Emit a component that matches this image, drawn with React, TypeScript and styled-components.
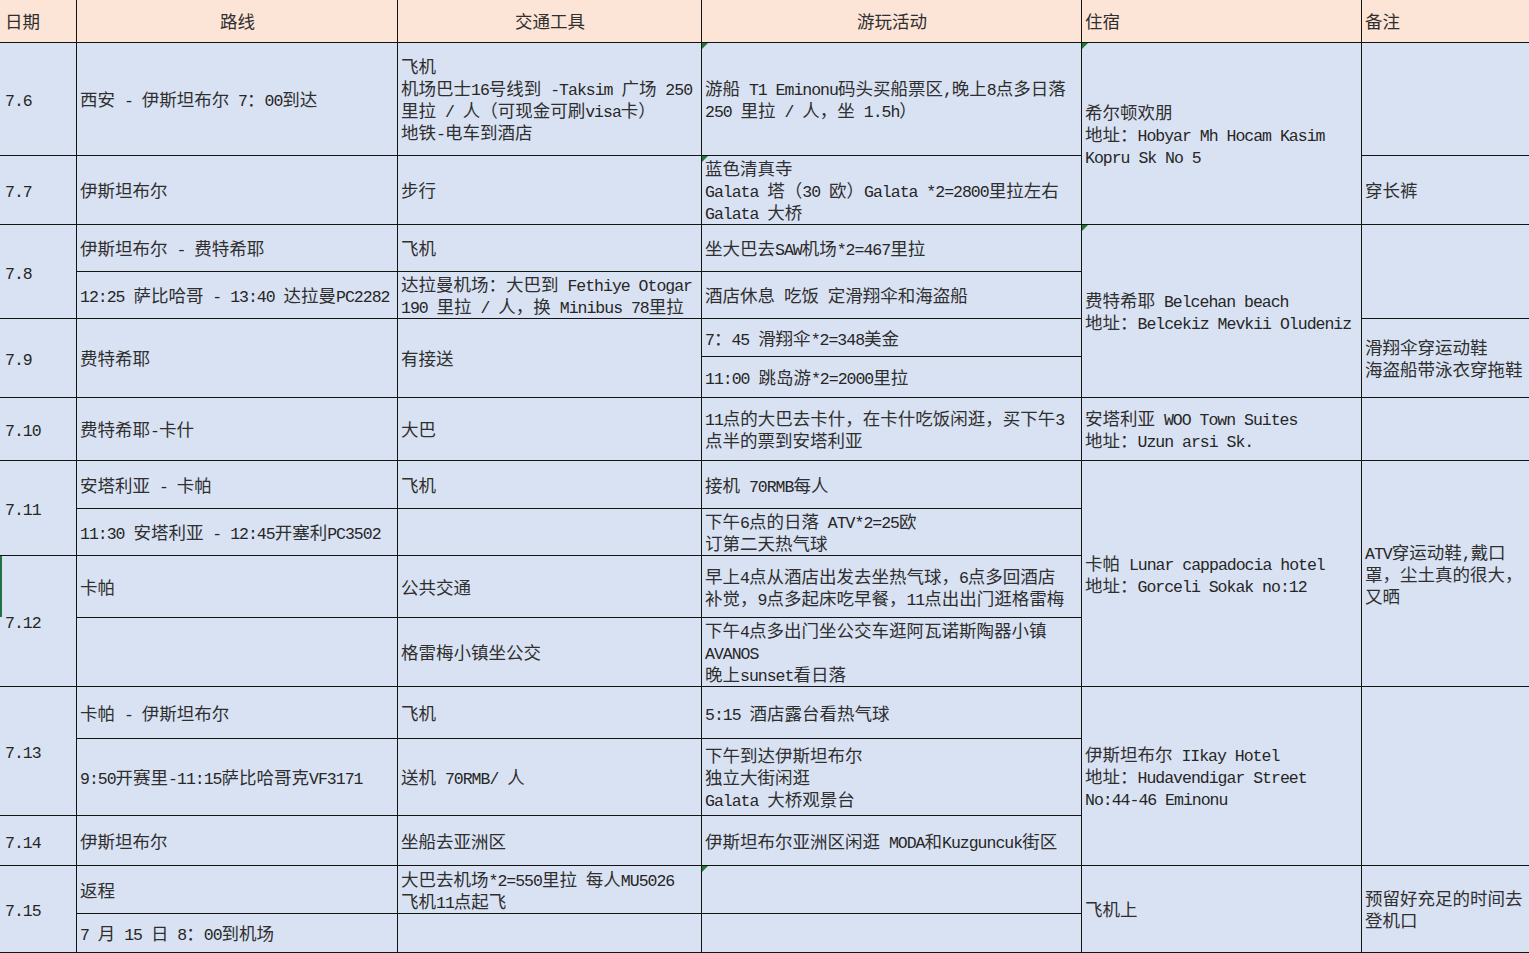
import React from 'react';
import styled, { createGlobalStyle } from 'styled-components';

const GlobalStyle = createGlobalStyle`
  html, body { margin: 0; padding: 0; background: #ffffff; overflow: hidden; }
  body { font-family: "Noto Sans CJK SC", "Noto Sans CJK JP", sans-serif; }
`;

const Sheet = styled.div`
  display: grid;
  grid-template-columns: 77px 321px 304px 380px 280px 168px;
  grid-template-rows: 43px 113px 69px 47px 47px 38px 41px 63px 48px 47px 62px 69px 52px 77px 50px 48px 39px;
  width: 1530px;
  height: 953px;
  font-family: "Noto Sans CJK SC", "Noto Sans CJK JP", sans-serif;
  font-size: 17.5px;
  line-height: 22px;
  color: #2f2f2f;
`;

const Cell = styled.div<{
  $span: number;
  $head: boolean;
  $center: boolean;
  $date: boolean;
  $mark: boolean;
  $sel: boolean;
}>`
  position: relative;
  box-sizing: border-box;
  grid-row: span ${(p) => p.$span};
  background: ${(p) => (p.$head ? '#fce4d6' : '#d9e2f3')};
  border-right: 1px solid #141414;
  border-bottom: 1px solid #141414;
  display: flex;
  flex-direction: column;
  justify-content: center;
  align-items: ${(p) => (p.$center ? 'center' : 'flex-start')};
  padding: 0 2px 0 ${(p) => (p.$date ? 5 : 3)}px;
  white-space: pre;
  overflow: hidden;

  &::before {
    content: '';
    display: ${(p) => (p.$mark ? 'block' : 'none')};
    position: absolute;
    left: 0;
    top: 0;
    width: 0;
    height: 0;
    border-top: 6px solid #1e7b34;
    border-right: 6px solid transparent;
  }

  &::after {
    content: '';
    display: ${(p) => (p.$sel ? 'block' : 'none')};
    position: absolute;
    left: 0;
    top: 0;
    width: 2px;
    height: 61px;
    background: #217346;
  }
`;

const Line = styled.div`
  height: 22px;
`;

const Latin = styled.span`
  font-family: "Liberation Mono", "DejaVu Sans Mono", monospace;
  font-size: 16.5px;
  letter-spacing: -1px;
  color: #262626;
`;

type CellData = {
  t?: string | string[];
  span?: number;
  center?: boolean;
  mark?: boolean;
  sel?: boolean;
  date?: boolean;
};

const LATIN_RUN = /([\u0020-\u024F]+)/;
const IS_LATIN = /^[\u0020-\u024F]+$/;

function runs(s: string) {
  return s
    .split(LATIN_RUN)
    .filter(Boolean)
    .map((part, i) =>
      IS_LATIN.test(part) ? <Latin key={i}>{part}</Latin> : <React.Fragment key={i}>{part}</React.Fragment>
    );
}

const header: CellData[] = [
  { t: '日期' },
  { t: '路线', center: true },
  { t: '交通工具', center: true },
  { t: '游玩活动', center: true },
  { t: '住宿' },
  { t: '备注' },
];

const body: CellData[] = [
  // 7.6
  { t: '7.6', date: true },
  { t: '西安 - 伊斯坦布尔 7：00到达' },
  { t: ['飞机', '机场巴士16号线到 -Taksim 广场 250', '里拉 / 人（可现金可刷visa卡）', '地铁-电车到酒店'] },
  { t: ['游船 T1 Eminonu码头买船票区,晚上8点多日落', '250 里拉 / 人，坐 1.5h）'], mark: true },
  { t: ['希尔顿欢朋', '地址：Hobyar Mh Hocam Kasim', 'Kopru Sk No 5'], span: 2, mark: true },
  {},
  // 7.7
  { t: '7.7', date: true },
  { t: '伊斯坦布尔' },
  { t: '步行' },
  { t: ['蓝色清真寺', 'Galata 塔（30 欧）Galata *2=2800里拉左右', 'Galata 大桥'], mark: true },
  { t: '穿长裤' },
  // 7.8
  { t: '7.8', span: 2, date: true },
  { t: '伊斯坦布尔 - 费特希耶' },
  { t: '飞机' },
  { t: '坐大巴去SAW机场*2=467里拉' },
  { t: ['费特希耶 Belcehan beach', '地址：Belcekiz Mevkii Oludeniz'], span: 4, mark: true },
  { span: 2 },
  { t: '12:25 萨比哈哥 - 13:40 达拉曼PC2282' },
  { t: ['达拉曼机场：大巴到 Fethiye Otogar', '190 里拉 / 人，换 Minibus 78里拉'] },
  { t: '酒店休息 吃饭 定滑翔伞和海盗船' },
  // 7.9
  { t: '7.9', span: 2, date: true },
  { t: '费特希耶', span: 2 },
  { t: '有接送', span: 2 },
  { t: '7：45 滑翔伞*2=348美金' },
  { t: ['滑翔伞穿运动鞋', '海盗船带泳衣穿拖鞋'], span: 2 },
  { t: '11:00 跳岛游*2=2000里拉' },
  // 7.10
  { t: '7.10', date: true },
  { t: '费特希耶-卡什' },
  { t: '大巴' },
  { t: ['11点的大巴去卡什，在卡什吃饭闲逛，买下午3', '点半的票到安塔利亚'] },
  { t: ['安塔利亚 WOO Town Suites', '地址：Uzun arsi Sk.'] },
  {},
  // 7.11
  { t: '7.11', span: 2, date: true },
  { t: '安塔利亚 - 卡帕' },
  { t: '飞机' },
  { t: '接机 70RMB每人' },
  { t: ['卡帕 Lunar cappadocia hotel', '地址：Gorceli Sokak no:12'], span: 4 },
  { t: ['ATV穿运动鞋,戴口', '罩，尘土真的很大，', '又晒'], span: 4 },
  { t: '11:30 安塔利亚 - 12:45开塞利PC3502' },
  {},
  { t: ['下午6点的日落 ATV*2=25欧', '订第二天热气球'] },
  // 7.12
  { t: '7.12', span: 2, date: true, sel: true },
  { t: '卡帕' },
  { t: '公共交通' },
  { t: ['早上4点从酒店出发去坐热气球，6点多回酒店', '补觉，9点多起床吃早餐，11点出出门逛格雷梅'] },
  {},
  { t: '格雷梅小镇坐公交' },
  { t: ['下午4点多出门坐公交车逛阿瓦诺斯陶器小镇', 'AVANOS', '晚上sunset看日落'] },
  // 7.13
  { t: '7.13', span: 2, date: true },
  { t: '卡帕 - 伊斯坦布尔' },
  { t: '飞机' },
  { t: '5:15 酒店露台看热气球' },
  { t: ['伊斯坦布尔 IIkay Hotel', '地址：Hudavendigar Street', 'No:44-46 Eminonu'], span: 3 },
  { span: 3 },
  { t: '9:50开赛里-11:15萨比哈哥克VF3171' },
  { t: '送机 70RMB/ 人' },
  { t: ['下午到达伊斯坦布尔', '独立大街闲逛', 'Galata 大桥观景台'] },
  // 7.14
  { t: '7.14', date: true },
  { t: '伊斯坦布尔' },
  { t: '坐船去亚洲区' },
  { t: '伊斯坦布尔亚洲区闲逛 MODA和Kuzguncuk街区' },
  // 7.15
  { t: '7.15', span: 2, date: true },
  { t: '返程' },
  { t: ['大巴去机场*2=550里拉 每人MU5026', '飞机11点起飞'] },
  { mark: true },
  { t: '飞机上', span: 2 },
  { t: ['预留好充足的时间去', '登机口'], span: 2 },
  { t: '7 月 15 日 8：00到机场' },
  {},
  {},
];

function renderCell(c: CellData, key: string, head: boolean) {
  const lines = c.t === undefined ? [] : Array.isArray(c.t) ? c.t : [c.t];
  return (
    <Cell
      key={key}
      $span={c.span ?? 1}
      $head={head}
      $center={!!c.center}
      $date={!!c.date || key === 'h0'}
      $mark={!!c.mark}
      $sel={!!c.sel}
    >
      {lines.map((l, i) => (
        <Line key={i}>{runs(l)}</Line>
      ))}
    </Cell>
  );
}

export default function App() {
  return (
    <>
      <GlobalStyle />
      <Sheet>
        {header.map((c, i) => renderCell(c, `h${i}`, true))}
        {body.map((c, i) => renderCell(c, `b${i}`, false))}
      </Sheet>
    </>
  );
}
